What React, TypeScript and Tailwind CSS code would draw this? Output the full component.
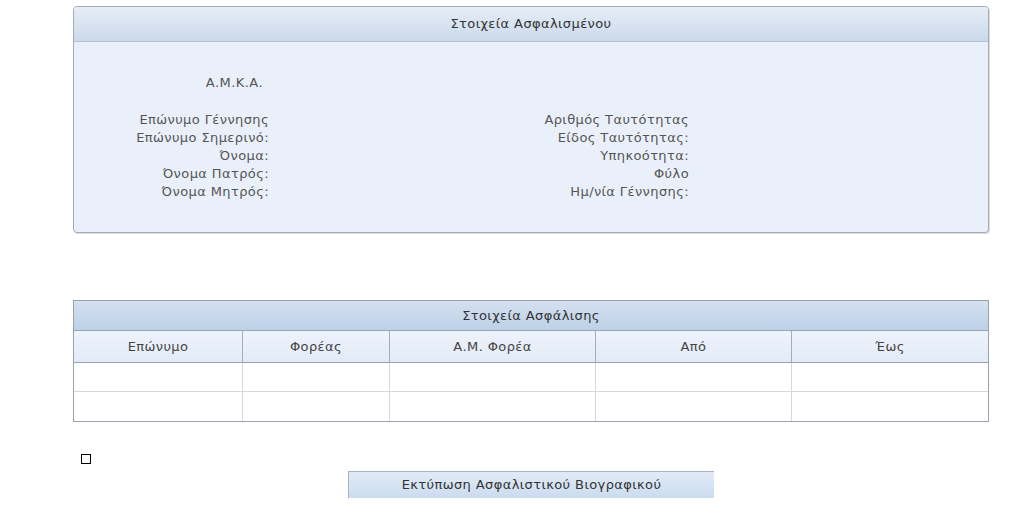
const font = { fontFamily: '"DejaVu Sans", Verdana, sans-serif', letterSpacing: "0.4px" };

const leftRows = [
  "Επώνυμο Γέννησης",
  "Επώνυμο Σημερινό:",
  "Όνομα:",
  "Όνομα Πατρός:",
  "Όνομα Μητρός:",
];

const rightRows = [
  "Αριθμός Ταυτότητας",
  "Είδος Ταυτότητας:",
  "Υπηκοότητα:",
  "Φύλο",
  "Ημ/νία Γέννησης:",
];

const cols = [
  { label: "Επώνυμο", w: "w-[169px]" },
  { label: "Φορέας", w: "w-[147px]" },
  { label: "Α.Μ. Φορέα", w: "w-[206px]" },
  { label: "Από", w: "w-[196px]" },
  { label: "Έως", w: "flex-1" },
];

function InsuredPanel() {
  return (
    <div className="w-[916px] overflow-hidden rounded-[4px] border border-[#a3acb8] bg-[#e9f0fa] shadow-[1px_1px_1px_rgba(0,0,0,0.15)]">
      <div className="flex h-[35px] items-center justify-center border-b border-[#b5c3d4] bg-gradient-to-b from-[#e6edf6] to-[#cbdaeb] text-[13px] text-[#333]">
        Στοιχεία Ασφαλισμένου
      </div>
      <div className="h-[190px] pt-[32px] text-[13px] leading-[18px] text-[#555]">
        <div className="w-[189px] text-right">Α.Μ.Κ.Α.</div>
        <div className="mt-[19px] grid grid-cols-[195px_226px_194px_1fr]">
          {leftRows.map((l, i) => (
            <div key={l} className="contents">
              <div className="text-right">{l}</div>
              <div />
              <div className="text-right">{rightRows[i]}</div>
              <div />
            </div>
          ))}
        </div>
      </div>
    </div>
  );
}

function InsuranceTable() {
  return (
    <div className="w-[916px] border border-[#9aa3ad] text-[13px]">
      <div className="flex h-[30px] items-center justify-center border-b border-[#97a6b8] bg-gradient-to-b from-[#d3e0f0] to-[#bed1e8] text-[#333]">
        Στοιχεία Ασφάλισης
      </div>
      <div className="flex h-[32px] border-b border-[#9aa3ad] bg-gradient-to-b from-[#eef3fb] to-[#e2ebf7] text-[#444]">
        {cols.map((c, i) => (
          <div
            key={c.label}
            className={`${c.w} flex items-center justify-center ${i < 4 ? "border-r border-[#a6adb6]" : ""}`}
          >
            {c.label}
          </div>
        ))}
      </div>
      {[0, 1].map((r) => (
        <div key={r} className={`flex h-[29px] bg-white ${r === 0 ? "border-b border-[#d4d9df]" : ""}`}>
          {cols.map((c, i) => (
            <div key={c.label} className={`${c.w} ${i < 4 ? "border-r border-[#d4d9df]" : ""}`} />
          ))}
        </div>
      ))}
    </div>
  );
}

export default function App() {
  return (
    <div className="h-[514px] w-[1024px] overflow-hidden bg-white pl-[73px] pt-[6px]" style={font}>
      <InsuredPanel />
      <div className="mt-[67px]">
        <InsuranceTable />
      </div>
      <div className="ml-[8px] mt-[32px] h-[10px] w-[10px] border-[1.5px] border-black bg-white" />
      <div className="mt-[7px] flex w-[916px] justify-center">
        <button className="h-[27px] w-[366px] border-l border-t border-[#a9b4c1] bg-gradient-to-b from-[#e1ebf6] to-[#cbdcef] text-[13px] text-[#333]">
          Εκτύπωση Ασφαλιστικού Βιογραφικού
        </button>
      </div>
    </div>
  );
}
